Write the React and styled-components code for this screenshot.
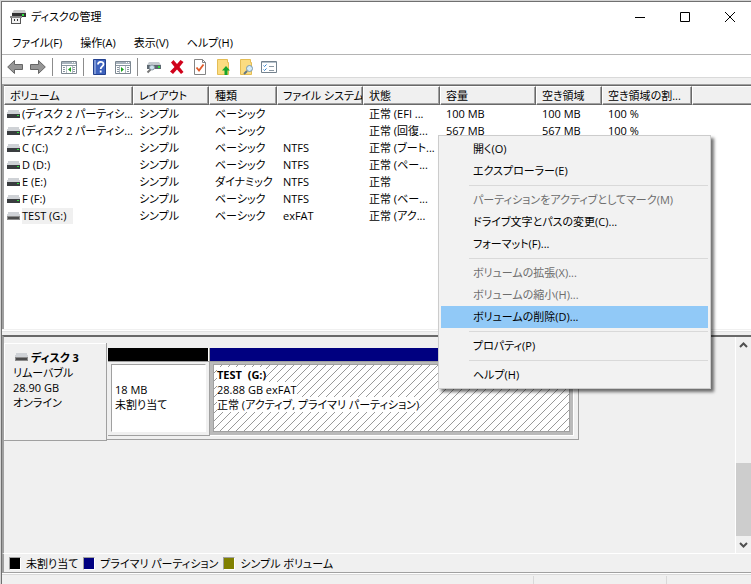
import styled, { createGlobalStyle } from 'styled-components';

const colors = {
  face: '#f0f0f0',
  shadow: '#a0a0a0',
  dark: '#696969',
  line: '#d9d9d9',
  navy: '#000080',
  olive: '#808000',
  highlight: '#91c9f7',
};

const GlobalStyle = createGlobalStyle`
  * {
    box-sizing: border-box;
  }

  html,
  body,
  #root {
    height: 100%;
    margin: 0;
  }

  body,
  button {
    font-family: "Open Sans", "Noto Sans CJK JP", sans-serif;
    font-size: 11px;
    line-height: 17px;
    font-feature-settings: "palt";
    color: #000;
  }

  button {
    margin: 0;
    padding: 0;
    border: 0;
    background: none;
    text-align: left;
  }
`;

const Desktop = styled.div`
  display: flex;
  height: 100%;
  padding: 1px 0 0 1px;
  overflow: hidden;
  background: #d4d4d4;
`;

const Window = styled.main`
  position: relative;
  display: flex;
  flex: 1;
  flex-direction: column;
  min-width: 0;
  border-top: 1px solid #707070;
  border-left: 1px solid #707070;
  background: ${colors.face};
`;

const TitleBar = styled.header`
  display: flex;
  flex: none;
  align-items: center;
  height: 30px;
  margin-right: -2px;
  padding-left: 8px;
  background: #fff;
`;

const Title = styled.h1`
  flex: 1;
  margin: 0 0 2px 5px;
  font-size: 11px;
  font-weight: 400;
`;

const WindowButton = styled.button`
  display: flex;
  align-items: center;
  justify-content: center;
  width: 45px;
  height: 28px;
`;

const MenuBar = styled.nav`
  display: flex;
  flex: none;
  align-items: flex-start;
  gap: 18px;
  height: 23px;
  padding: 2px 0 0 10px;
  border-bottom: 1px solid #b4b4b4;
  background: #fff;
`;

const Toolbar = styled.div`
  display: flex;
  flex: none;
  align-items: center;
  height: 23px;
  padding: 2px 0 0 5px;
  border-bottom: 1px solid ${colors.line};
  background: #fff;
`;

const ToolButton = styled.button`
  display: flex;
  width: 16px;
  height: 16px;
  margin-right: 7px;
`;

const ToolSeparator = styled.span`
  width: 1px;
  height: 18px;
  margin: 0 8px 0 -1px;
  background: #8c8c8c;
`;

const Content = styled.div`
  display: flex;
  flex: 1;
  flex-direction: column;
  min-height: 0;
  padding-top: 6px;
`;

const ListPane = styled.section`
  flex: 246 1 0;
  min-height: 0;
  overflow: hidden;
  border-top: 1px solid ${colors.shadow};
  border-left: 2px solid ${colors.shadow};
  background: #fff;
`;

const VolumeTable = styled.table`
  width: 100%;
  border-top: 1px solid ${colors.dark};
  border-spacing: 0;
  table-layout: fixed;
`;

const HeadCell = styled.th`
  width: ${({ $width }) => ($width ? `${$width}px` : 'auto')};
  height: 19px;
  padding: 0 0 0 5px;
  overflow: hidden;
  border: 1px solid #fff;
  border-right: 1px solid ${colors.dark};
  border-bottom: 1px solid ${colors.dark};
  box-shadow: inset -1px -1px ${colors.shadow};
  background: ${colors.face};
  font-weight: 400;
  line-height: 16px;
  text-align: left;
  white-space: nowrap;

  &:last-child {
    border-right: 0;
    box-shadow: inset 0 -1px ${colors.shadow};
  }
`;

const Cell = styled.td`
  height: 17px;
  padding: 0 0 0 6px;
  overflow: hidden;
  line-height: 16px;
  white-space: nowrap;
`;

const VolumeName = styled.div`
  display: flex;
  align-items: center;
  gap: 2px;
  height: 17px;
  margin-left: -3px;
`;

const VolumeLabel = styled.span`
  padding-right: 6px;
  background: ${({ $selected }) => ($selected ? colors.face : 'none')};
`;

const Splitter = styled.div`
  flex: none;
  height: 5px;
  margin-top: 1px;
  border-top: 1px solid #fff;
  box-shadow: inset 0 1px #e3e3e3;
`;

const DiskPane = styled.section`
  display: flex;
  flex: 218 1 0;
  min-height: 0;
  border-top: 2px solid ${colors.dark};
  border-left: 2px solid ${colors.shadow};
`;

const DiskList = styled.div`
  flex: 1;
  min-width: 0;
  padding-top: 6px;
`;

const DiskRow = styled.article`
  display: flex;
  align-items: flex-start;
  width: 575px;
`;

const DiskInfo = styled.div`
  flex: none;
  width: 103px;
  height: 98px;
  padding: 7px 9px;
  border: solid ${colors.shadow};
  border-width: 0 1px 1px 0;
  box-shadow: inset 1px 1px #fff;
  line-height: 15px;
`;

const DiskName = styled.h2`
  display: flex;
  align-items: center;
  gap: 3px;
  margin: 0 0 0 2px;
  font-size: 11px;
  font-weight: 700;
  line-height: 15px;
`;

const Partitions = styled.div`
  display: flex;
  flex: 1;
  height: 97px;
  padding: 5px 4px 3px 1px;
  border: solid ${colors.shadow};
  border-width: 0 1px 1px 0;
`;

const Partition = styled.div`
  display: flex;
  flex: ${({ $width }) => ($width ? `0 0 ${$width}px` : '1')};
  flex-direction: column;
  border: solid ${({ $selected }) => ($selected ? '#fff' : colors.shadow)};
  border-width: 0 1px 1px 0;
`;

const PartitionBar = styled.div`
  height: 13px;
  border-right: 1px solid #fff;
  background: ${({ $color }) => $color};
`;

const PartitionFrame = styled.div`
  display: flex;
  flex: 1;
  padding: 2px 3px 3px;
  border-top: 1px solid ${colors.shadow};
  background: ${({ $selected }) => ($selected ? '#bababa' : colors.face)};
`;

const PartitionBody = styled.div`
  flex: 1;
  padding: ${({ $selected }) => ($selected ? '2px 3px' : '17px 3px 0')};
  border: 1px solid ${colors.shadow};
  border-right-color: ${({ $selected }) => ($selected ? colors.shadow : '#fff')};
  border-bottom-color: ${({ $selected }) => ($selected ? colors.shadow : '#fff')};
  background: ${({ $selected }) =>
    $selected
      ? 'url("data:image/svg+xml,%3Csvg xmlns=\'http://www.w3.org/2000/svg\' width=\'8\' height=\'8\' shape-rendering=\'crispEdges\'%3E%3Cpath fill=\'%23999\' d=\'M7 0h1v1H7zM6 1h1v1H6zM5 2h1v1H5zM4 3h1v1H4zM3 4h1v1H3zM2 5h1v1H2zM1 6h1v1H1zM0 7h1v1H0z\'/%3E%3C/svg%3E") #fff'
      : '#fff'};
  line-height: 15px;
`;

const PartitionLine = styled.div`
  width: fit-content;
  background: #fff;
  font-weight: ${({ $bold }) => ($bold ? 700 : 400)};
  white-space: pre;
`;

const ScrollBar = styled.div`
  display: flex;
  flex: none;
  flex-direction: column;
  width: 16px;
  border-left: 1px solid #fff;
`;

const ScrollButton = styled.button`
  display: flex;
  align-items: center;
  justify-content: center;
  height: 17px;
`;

const ScrollTrack = styled.div`
  display: flex;
  flex: 1;
  align-items: flex-end;
`;

const ScrollThumb = styled.div`
  width: 100%;
  height: 40%;
  background: #cdcdcd;
`;

const Legend = styled.footer`
  display: flex;
  flex: none;
  align-items: center;
  gap: 5px;
  height: 20px;
  padding-left: 5px;
  border: solid #fff;
  border-width: 1px 0 0;
  border-bottom: 1px solid ${colors.shadow};
  border-left: 2px solid ${colors.shadow};
`;

const LegendItem = styled.span`
  display: flex;
  align-items: center;
  gap: 5px;
`;

const Swatch = styled.span`
  width: 12px;
  height: 13px;
  border: 1px solid ${colors.shadow};
  border-right-color: #fff;
  border-bottom-color: #fff;
  background: ${({ $color }) => $color};
`;

const StatusBar = styled.div`
  display: grid;
  flex: none;
  grid-template-columns: 1fr 133px 84px;
  height: 11px;
  padding-top: 2px;
  border-top: 1px solid #fff;
  box-shadow: inset 0 1px ${colors.line};
`;

const StatusCell = styled.span`
  border-right: 1px solid ${colors.line};

  &:last-child {
    border-right: 0;
  }
`;

const ContextMenu = styled.div`
  position: absolute;
  top: 133px;
  right: 40px;
  width: 273px;
  padding: 2px;
  border: 1px solid #ccc;
  background: #f2f2f2;
  box-shadow: 3px 3px 3px rgba(0, 0, 0, 0.55);
`;

const ContextItem = styled.button`
  display: block;
  width: 100%;
  height: 22px;
  padding-left: 32px;
  line-height: 20px;
  background: ${({ $active }) => ($active ? colors.highlight : 'none')};

  &:disabled {
    color: #6d6d6d;
  }
`;

const ContextSeparator = styled.hr`
  height: 1px;
  margin: 3px 0 3px 28px;
  border: 0;
  background: ${colors.line};
`;

const columns = [
  { label: 'ボリューム', width: 129 },
  { label: 'レイアウト', width: 76 },
  { label: '種類', width: 68 },
  { label: 'ファイル システム', width: 86 },
  { label: '状態', width: 77 },
  { label: '容量', width: 96 },
  { label: '空き領域', width: 66 },
  { label: '空き領域の割...', width: 90 },
  { label: '' },
];

const volumes = [
  ['(ディスク 2 パーティシ...', 'シンプル', 'ベーシック', '', '正常 (EFI ...', '100 MB', '100 MB', '100 %'],
  ['(ディスク 2 パーティシ...', 'シンプル', 'ベーシック', '', '正常 (回復...', '567 MB', '567 MB', '100 %'],
  ['C (C:)', 'シンプル', 'ベーシック', 'NTFS', '正常 (ブート...'],
  ['D (D:)', 'シンプル', 'ベーシック', 'NTFS', '正常 (ペー...'],
  ['E (E:)', 'シンプル', 'ダイナミック', 'NTFS', '正常'],
  ['F (F:)', 'シンプル', 'ベーシック', 'NTFS', '正常 (ベー...'],
  ['TEST (G:)', 'シンプル', 'ベーシック', 'exFAT', '正常 (アク...'],
];

const menuItems = [
  { label: '開く(O)' },
  { label: 'エクスプローラー(E)' },
  null,
  { label: 'パーティションをアクティブとしてマーク(M)', disabled: true },
  { label: 'ドライブ文字とパスの変更(C)...' },
  { label: 'フォーマット(F)...' },
  null,
  { label: 'ボリュームの拡張(X)...', disabled: true },
  { label: 'ボリュームの縮小(H)...', disabled: true },
  { label: 'ボリュームの削除(D)...', active: true },
  null,
  { label: 'プロパティ(P)' },
  null,
  { label: 'ヘルプ(H)' },
];

const legend = [
  { label: '未割り当て', color: '#000' },
  { label: 'プライマリ パーティション', color: colors.navy },
  { label: 'シンプル ボリューム', color: colors.olive },
];

const DriveSvg = styled.svg`
  flex: none;
`;

const DriveIcon = ({ removable }) => (
  <DriveSvg width="13" height="8" viewBox="0 0 13 8" shapeRendering="crispEdges">
    <path d="M1 0h11l1 4H0z" fill="#cfd2d6" />
    <path d="M0 4h13v4H0z" fill={removable ? '#8c8c8c' : '#3a3d40'} />
    {removable ? <path d="M1 5h11v2H1z" fill="#4c4c4c" /> : <path d="M10 5h2v1h-2z" fill="#2fe03c" />}
  </DriveSvg>
);

const AppIcon = () => (
  <svg width="16" height="16" viewBox="0 0 16 16">
    <path d="M4 1h11l1 3H2z" fill="#c9c9c9" />
    <path d="M2 4h14v4H2z" fill="#333" />
    <path d="M12 5h2v2h-2z" fill="#2fe03c" />
    <path d="M0 7h12v2H0z" fill="#888" />
    <path d="M1 9h10v6H1z" fill="#555" />
    <path d="M2 9h8v5H2z" fill="#f2f2f2" />
    <path d="M4 10h1v2H4zM7 10h1v2H7z" fill="#333" />
  </svg>
);

const Arrow = ({ flip }) => (
  <svg width="16" height="16" viewBox="0 0 16 16">
    <path
      d="M.7 8 7.5 1.5v4h8v5h-8v4z"
      fill="#969696"
      stroke="#666"
      strokeLinejoin="round"
      transform={flip ? 'matrix(-1 0 0 1 16 0)' : undefined}
    />
  </svg>
);

const PaneIcon = ({ right }) => (
  <svg width="16" height="16" viewBox="0 0 16 16">
    <path d="M.5 2.5h15v12H.5z" fill="#fff" stroke="#7c8791" />
    <path d="M1 3h14v2H1z" fill="#a9b4be" />
    <path d="M11 3.5h1M13 3.5h1" stroke="#fff" />
    <path d="M1 6.5h14" stroke="#8995a0" />
    <path d={right ? 'M4.5 7v7M10.5 7v7' : 'M5.5 7v7M11.5 7v7'} stroke="#b3bcc4" />
    <path d="M2 8.5h2M2 10.5h2M2 12.5h2M12 8.5h2M12 10.5h2M12 12.5h2" stroke="#8995a0" />
    <path d={right ? 'M6 8v5l3-2.500z' : 'M10 8v5l-3-2.500z'} fill="#1fa31f" />
  </svg>
);

const HelpIcon = () => (
  <svg width="16" height="16" viewBox="0 0 16 16">
    <path d="M1.500.5h12v15h-12z" fill="#3e62bd" stroke="#23418f" />
    <path d="M2 1h2v14H2z" fill="#7e98d6" />
    <path d="M6 5.500C6 2 11.500 2 11.500 5.200 11.500 7.500 8.700 7.300 8.700 10M8.700 11.500v2" fill="none" stroke="#fff" strokeWidth="1.800" />
  </svg>
);

const DriveSearchIcon = () => (
  <svg width="16" height="16" viewBox="0 0 16 16">
    <path d="M3 3h10l2 3H1z" fill="#c3c9ce" />
    <path d="M1 6h14v4H1z" fill="#5d6871" />
    <path d="M12 7h2v2h-2z" fill="#2fe03c" />
    <circle cx="6" cy="8.500" r="2.500" fill="#cfe2ee" stroke="#8c9aa5" />
    <path d="m4.500 10.500-3 3" stroke="#777" strokeWidth="2" />
  </svg>
);

const DeleteIcon = () => (
  <svg width="16" height="16" viewBox="0 0 16 16">
    <path d="M2 3.500 4.500 1 8 5l3.500-4L14.500 3l-4 5 4 5-2.500 2-4-4.500L4 15l-3-2.500L5.500 8z" fill="#d0021b" />
  </svg>
);

const CheckPageIcon = () => (
  <svg width="16" height="16" viewBox="0 0 16 16">
    <path d="M2.500.5h8l3 3v12h-11z" fill="#fff" stroke="#848484" />
    <path d="M10.500.5v3h3" fill="none" stroke="#848484" />
    <path d="m4.500 8.500 2.500 3 4.500-6" fill="none" stroke="#e05a28" strokeWidth="1.800" />
  </svg>
);

const FolderIcon = ({ search }) => (
  <svg width="16" height="16" viewBox="0 0 16 16">
    <path d="M2.500.5h10v3h1v12h-11z" fill="#fbdc81" stroke="#e4bd55" />
    {search ? (
      <g>
        <circle cx="11.500" cy="9.500" r="3" fill="#d4ebf8" stroke="#7898ad" />
        <path d="m9 12-3 3" stroke="#627785" strokeWidth="2" />
      </g>
    ) : (
      <path d="m11 7 4 4.500h-2.500V16h-3v-4.500H7z" fill="#16a52b" />
    )}
  </svg>
);

const ListIcon = () => (
  <svg width="16" height="16" viewBox="0 0 16 16">
    <path d="M.5 2.500h15v11H.5z" fill="#fff" stroke="#74828e" />
    <path d="M1 3.500h14" stroke="#b6c2cc" />
    <path d="m2.500 6.500 1 1 2-2M2.500 10.500l1 1 2-2" fill="none" stroke="#2e80cc" />
    <path d="M8 7.500h5M8 11.500h5" stroke="#8b98a3" />
  </svg>
);

const Chevron = ({ down }) => (
  <svg width="9" height="6" viewBox="0 0 9 6">
    <path d={down ? 'M1 1l3.500 3.500L8 1' : 'M1 5l3.500-3.500L8 5'} fill="none" stroke="#505050" strokeWidth="2" />
  </svg>
);

const WindowControls = () => (
  <>
    <WindowButton aria-label="最小化">
      <svg width="11" height="11"><path d="M0 5.500h10" stroke="#000" /></svg>
    </WindowButton>
    <WindowButton aria-label="最大化">
      <svg width="11" height="11"><path d="M.5.5h9v9h-9z" fill="none" stroke="#000" /></svg>
    </WindowButton>
    <WindowButton aria-label="閉じる">
      <svg width="11" height="11"><path d="m0 0 10 10M10 0 0 10" stroke="#000" /></svg>
    </WindowButton>
  </>
);

const VolumeList = () => (
  <ListPane>
    <VolumeTable>
      <thead>
        <tr>
          {columns.map(({ label, width }) => (
            <HeadCell key={label} $width={width}>{label}</HeadCell>
          ))}
        </tr>
      </thead>
      <tbody>
        {volumes.map(([name, ...rest], index) => {
          const selected = name === 'TEST (G:)';
          return (
            <tr key={index}>
              <Cell>
                <VolumeName>
                  <DriveIcon removable={selected} />
                  <VolumeLabel $selected={selected}>{name}</VolumeLabel>
                </VolumeName>
              </Cell>
              {rest.map((value, i) => (
                <Cell key={i}>{value}</Cell>
              ))}
            </tr>
          );
        })}
      </tbody>
    </VolumeTable>
  </ListPane>
);

const DiskMap = () => (
  <DiskPane>
    <DiskList>
      <DiskRow>
        <DiskInfo>
          <DiskName><DriveIcon removable />ディスク 3</DiskName>
          <div>リムーバブル</div>
          <div>28.90 GB</div>
          <div>オンライン</div>
        </DiskInfo>
        <Partitions>
          <Partition $width={102}>
            <PartitionBar $color="#000" />
            <PartitionFrame>
              <PartitionBody>
                <PartitionLine>18 MB</PartitionLine>
                <PartitionLine>未割り当て</PartitionLine>
              </PartitionBody>
            </PartitionFrame>
          </Partition>
          <Partition $selected>
            <PartitionBar $color={colors.navy} />
            <PartitionFrame $selected>
              <PartitionBody $selected>
                <PartitionLine $bold>{'TEST  (G:)'}</PartitionLine>
                <PartitionLine>28.88 GB exFAT</PartitionLine>
                <PartitionLine>正常 (アクティブ, プライマリ パーティション)</PartitionLine>
              </PartitionBody>
            </PartitionFrame>
          </Partition>
        </Partitions>
      </DiskRow>
    </DiskList>
    <ScrollBar>
      <ScrollButton aria-label="上へ"><Chevron /></ScrollButton>
      <ScrollTrack><ScrollThumb /></ScrollTrack>
      <ScrollButton aria-label="下へ"><Chevron down /></ScrollButton>
    </ScrollBar>
  </DiskPane>
);

export default function App() {
  return (
    <Desktop>
      <GlobalStyle />
      <Window>
        <TitleBar>
          <AppIcon />
          <Title>ディスクの管理</Title>
          <WindowControls />
        </TitleBar>
        <MenuBar>
          <button>ファイル(F)</button>
          <button>操作(A)</button>
          <button>表示(V)</button>
          <button>ヘルプ(H)</button>
        </MenuBar>
        <Toolbar>
          <ToolButton aria-label="戻る"><Arrow /></ToolButton>
          <ToolButton aria-label="進む"><Arrow flip /></ToolButton>
          <ToolSeparator />
          <ToolButton aria-label="コンソール ツリー"><PaneIcon /></ToolButton>
          <ToolSeparator />
          <ToolButton aria-label="ヘルプ"><HelpIcon /></ToolButton>
          <ToolButton aria-label="操作ウィンドウ"><PaneIcon right /></ToolButton>
          <ToolSeparator />
          <ToolButton aria-label="再スキャン"><DriveSearchIcon /></ToolButton>
          <ToolButton aria-label="削除"><DeleteIcon /></ToolButton>
          <ToolButton aria-label="プロパティ"><CheckPageIcon /></ToolButton>
          <ToolButton aria-label="開く"><FolderIcon /></ToolButton>
          <ToolButton aria-label="エクスプローラー"><FolderIcon search /></ToolButton>
          <ToolButton aria-label="一覧"><ListIcon /></ToolButton>
        </Toolbar>
        <Content>
          <VolumeList />
          <Splitter />
          <DiskMap />
          <Legend>
            {legend.map(({ label, color }) => (
              <LegendItem key={label}><Swatch $color={color} />{label}</LegendItem>
            ))}
          </Legend>
        </Content>
        <StatusBar>
          <StatusCell />
          <StatusCell />
          <StatusCell />
        </StatusBar>
        <ContextMenu role="menu">
          {menuItems.map((item, index) =>
            item ? (
              <ContextItem key={index} role="menuitem" disabled={item.disabled} $active={item.active}>
                {item.label}
              </ContextItem>
            ) : (
              <ContextSeparator key={index} />
            )
          )}
        </ContextMenu>
      </Window>
    </Desktop>
  );
}
